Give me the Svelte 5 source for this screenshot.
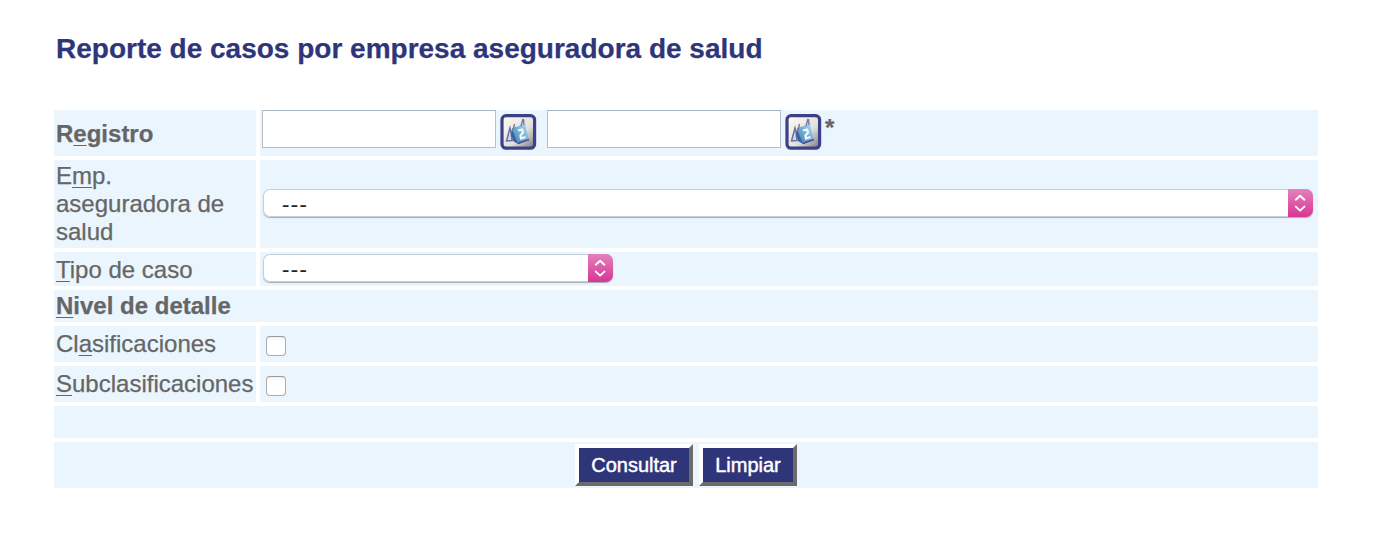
<script>
  let from = $state('');
  let to = $state('');
  let classes = $state(false);
  let subclasses = $state(false);
</script>

{#snippet calendar(id)}
  <button class="calendar" type="button" aria-label="Calendario">
    <svg width="38" height="38" viewBox="0 0 38 38">
      <defs>
        <linearGradient id="face-{id}" x1="0" y1="0" x2="1" y2="1">
          <stop offset="0" stop-color="#fffdf0" />
          <stop offset=".6" stop-color="#e2e0dc" />
          <stop offset="1" stop-color="#77777c" />
        </linearGradient>
        <linearGradient id="page-{id}" x1="1" y1="0" x2="0" y2="1">
          <stop offset="0" stop-color="#c3dff0" />
          <stop offset=".5" stop-color="#6fadd3" />
          <stop offset="1" stop-color="#3f7ab0" />
        </linearGradient>
        <filter id="soft-{id}" x="-10%" y="-10%" width="120%" height="120%">
          <feGaussianBlur stdDeviation=".75" />
        </filter>
      </defs>
      <g filter="url(#soft-{id})">
        <rect x="3" y="3.6" width="32.6" height="32.6" rx="4" fill="url(#face-{id})" stroke="#3d4188" stroke-width="3.2" />
        <path d="M11 16L7.5 29L13 28.5L12 20Z" fill="#d2dbe8" stroke="#6a6fa4" stroke-width="1.5" />
        <path d="M13 16L26 12L30 27L19 32L14 27Z" fill="url(#page-{id})" />
        <path d="M13 17L19 32L14 29L12 22Z" fill="#3d649f" />
        <path d="M19 31.5L30 27.5" stroke="#464d92" stroke-width="1.6" />
        <path d="M14 18L15.5 12M22 14L24 7M25 13L24.5 7" stroke="#7277a6" stroke-width="1.4" />
        <path d="M19 18.5L23 17.5L24 20.5L21.5 23.5L22 26.5L26.5 25" fill="none" stroke="#f1f8fb" stroke-width="2.3" />
      </g>
    </svg>
  </button>
{/snippet}

{#snippet picker(label)}
  <button class="picker" type="button" aria-label={label}>
    <span class="value">---</span>
    <span class="arrows">
      <svg width="25" height="28" viewBox="0 0 25 28" fill="none" stroke="#fff" stroke-width="1.9" stroke-linecap="round" stroke-linejoin="round">
        <path d="M7.8 10.7L12.1 6.7L16.4 10.7M7.8 17.6L12.1 21.6L16.4 17.6" />
      </svg>
    </span>
  </button>
{/snippet}

<main>
  <h1>Reporte de casos por empresa aseguradora de salud</h1>
  <form class="sheet" onsubmit={(e) => e.preventDefault()}>
    <div class="cell strong registro"><span>R<u>e</u>gistro</span></div>
    <div class="cell dates">
      <input type="text" aria-label="Desde" bind:value={from} />
      {@render calendar('from')}
      <input type="text" aria-label="Hasta" bind:value={to} />
      {@render calendar('to')}
      <span class="star">*</span>
    </div>

    <div class="cell company"><span>E<u>m</u>p.<br />aseguradora de<br />salud</span></div>
    <div class="cell wide">{@render picker('Emp. aseguradora de salud')}</div>

    <div class="cell tipo"><span><u>T</u>ipo de caso</span></div>
    <div class="cell narrow">{@render picker('Tipo de caso')}</div>

    <div class="cell full strong"><span><u>N</u>ivel de detalle</span></div>

    <label class="cell" for="classes"><span>Cl<u>a</u>sificaciones</span></label>
    <div class="cell check"><input id="classes" type="checkbox" bind:checked={classes} /></div>

    <label class="cell" for="subclasses"><span><u>S</u>ubclasificaciones</span></label>
    <div class="cell check"><input id="subclasses" type="checkbox" bind:checked={subclasses} /></div>

    <div class="cell full"></div>

    <div class="cell full actions">
      <button class="action" type="submit">Consultar</button>
      <button class="action clear" type="reset">Limpiar</button>
    </div>
  </form>
</main>

<style>
  :global(body) {
    background: #fff;
  }
  main {
    box-sizing: border-box;
    padding: 33px 70px 0 54px;
    font-family: 'Liberation Sans', Arial, sans-serif;
    color: #666;
  }
  h1 {
    margin: 0 0 45px 2px;
    font-size: 28px;
    line-height: 32px;
    color: #2f3579;
    white-space: nowrap;
    -webkit-text-stroke: 0.25px #2f3579;
  }
  .sheet {
    display: grid;
    grid-template-columns: 202px 1058px;
    grid-template-rows: 46px 88px 34px 32px 36px 36px 32px 46px;
    gap: 4px;
    font-size: 24px;
    line-height: 28px;
    -webkit-text-stroke: 0.25px #666;
  }
  .cell {
    box-sizing: border-box;
    min-width: 0;
    padding: 2px;
    background: #eaf5fe;
    white-space: nowrap;
  }
  label.cell {
    padding-top: 4px;
  }
  .full {
    grid-column: 1 / -1;
  }
  .strong {
    font-weight: bold;
  }
  .registro {
    padding-top: 10px;
  }
  .tipo {
    padding-top: 4px;
  }
  u {
    text-decoration-color: #666;
    text-decoration-thickness: 1px;
    text-underline-offset: 3px;
    text-decoration-skip-ink: none;
  }
  .dates {
    display: flex;
    align-items: flex-start;
    padding-top: 0;
  }
  .dates input {
    box-sizing: border-box;
    width: 234px;
    height: 38px;
    margin: 0;
    padding: 2px 4px;
    border: 1px solid #bbbdbe;
    border-top-color: #a9b8c3;
    border-radius: 0;
    outline: none;
    font: inherit;
  }
  .calendar {
    width: 38px;
    height: 38px;
    margin: 2px 10px 0 3px;
    padding: 0;
    border: 0;
    background: none;
  }
  .calendar svg {
    display: block;
  }
  .star {
    margin: 4px 0 0 -7px;
    font-weight: bold;
  }
  .wide,
  .narrow {
    padding: 2px 5px 0 3px;
  }
  .wide {
    padding-top: 29px;
  }
  .narrow .picker {
    width: 350px;
  }
  .picker {
    display: flex;
    width: 1050px;
    height: 28px;
    padding: 0;
    border: 0;
    border-radius: 7px;
    background: #fff;
    box-shadow: 0 0 0 1px #c3d0d9 inset, 0 1px 1px #a3adb3;
    overflow: hidden;
    color: #222;
    text-align: left;
  }
  .value {
    flex: 1;
    padding-left: 19px;
    font: 22px/32px 'Liberation Sans', Arial, sans-serif;
    letter-spacing: 1.4px;
    -webkit-text-stroke: 0.2px #222;
  }
  .arrows {
    width: 25px;
    height: 28px;
    background: linear-gradient(#e282bd, #d93594);
  }
  .arrows svg {
    display: block;
  }
  .check {
    padding: 10px 6px 0;
  }
  .check input {
    display: block;
    appearance: none;
    box-sizing: border-box;
    width: 20px;
    height: 20px;
    margin: 0;
    border: 1px solid #adadad;
    border-top-color: #999;
    border-radius: 4px;
    background: linear-gradient(#f1f1f1, #fff 4px);
  }
  .check input:checked {
    background: #d93594;
  }
  .actions {
    display: flex;
    justify-content: center;
    gap: 6px;
  }
  .action {
    box-sizing: border-box;
    width: 118px;
    height: 42px;
    padding: 0;
    border: 4px solid;
    border-color: #fff #6b6b6b #6b6b6b #fff;
    background: #2f3579;
    color: #fff;
    font: 20px/34px 'Liberation Sans', Arial, sans-serif;
    -webkit-text-stroke: 0.45px #fff;
  }
  .clear {
    width: 98px;
  }
</style>
